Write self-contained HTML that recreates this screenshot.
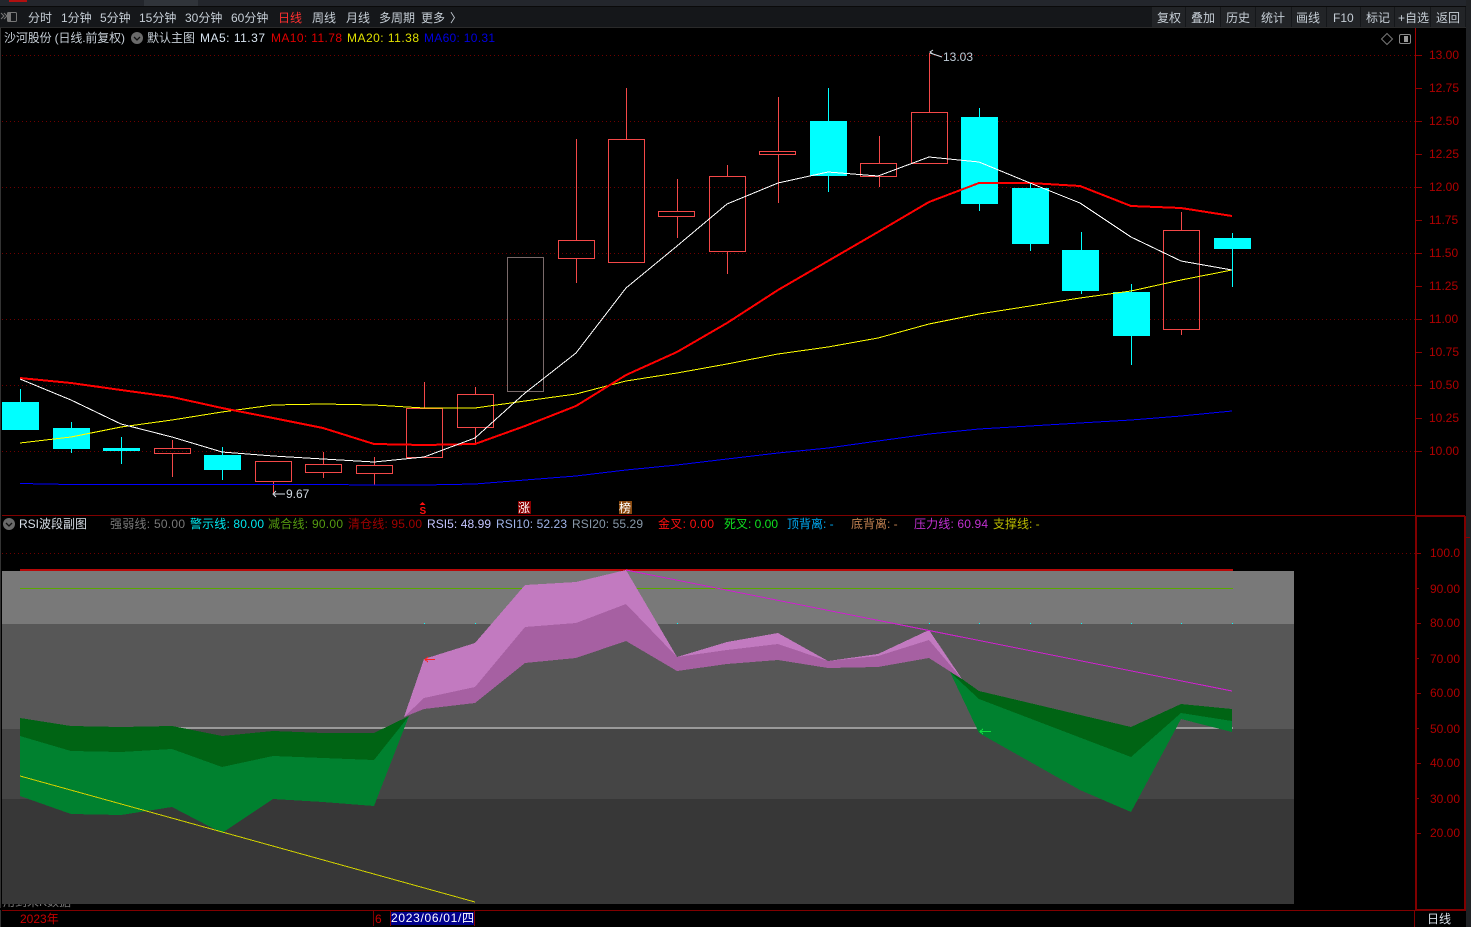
<!DOCTYPE html>
<html><head><meta charset="utf-8"><style>
html,body{margin:0;padding:0;background:#000;width:1471px;height:927px;overflow:hidden}
svg{display:block}
text{font-family:"Liberation Sans","Noto Sans CJK SC",sans-serif;font-size:12px;dominant-baseline:auto}
.t{fill:#c6ced6}
.ax{fill:#b00000}
.ce{shape-rendering:crispEdges}
</style></head><body>
<svg width="1471" height="927" viewBox="0 0 1471 927" xmlns="http://www.w3.org/2000/svg">
<rect width="1471" height="927" fill="#000"/>
<!-- top chrome -->
<g class="ce">
<rect x="0" y="0" width="1471" height="6" fill="#23262c"/>
<rect x="9" y="0" width="18" height="2" fill="#b01010"/>
<rect x="144" y="0" width="54" height="6" fill="#30343a"/>
<rect x="0" y="6" width="1471" height="1" fill="#0a0a0a"/>
<rect x="0" y="7" width="1471" height="20" fill="#15171a"/>
<rect x="0" y="27" width="1471" height="1" fill="#2a2a2a"/>
<g fill="#222427">
<rect x="1152" y="7" width="33" height="20"/><rect x="1186" y="7" width="34" height="20"/><rect x="1221" y="7" width="34" height="20"/><rect x="1256" y="7" width="35" height="20"/><rect x="1292" y="7" width="34" height="20"/><rect x="1327" y="7" width="33" height="20"/><rect x="1361" y="7" width="33" height="20"/><rect x="1395" y="7" width="35" height="20"/><rect x="1431" y="7" width="34" height="20"/>
</g>
<rect x="1466" y="0" width="5" height="927" fill="#202225"/>
<rect x="0" y="28" width="1" height="899" fill="#333"/>
</g>
<g fill="none" stroke="#777">
<path d="M1 13l3 3-3 3M4 13l3 3-3 3" stroke-width="1"/>
<rect x="7.500" y="12.500" width="9" height="9" rx="1"/>
<rect x="8" y="13" width="3" height="8" fill="#777" stroke="none"/>
</g>
<g class="t">
<text x="28" y="22">分时</text><text x="61" y="22">1分钟</text><text x="100" y="22">5分钟</text><text x="139" y="22">15分钟</text><text x="185" y="22">30分钟</text><text x="231" y="22">60分钟</text>
<text x="278" y="22" style="fill:#ff3030">日线</text><text x="312" y="22">周线</text><text x="346" y="22">月线</text><text x="379" y="22">多周期</text><text x="421" y="22">更多</text><text x="450" y="22">〉</text>
<text x="1157" y="22">复权</text><text x="1191" y="22">叠加</text><text x="1226" y="22">历史</text><text x="1261" y="22">统计</text><text x="1296" y="22">画线</text><text x="1333" y="22">F10</text><text x="1366" y="22">标记</text><text x="1398" y="22">+自选</text><text x="1436" y="22">返回</text>
</g>
<!-- info row -->
<text x="4" y="42" class="t" textLength="121">沙河股份 (日线.前复权)</text>
<circle cx="137" cy="38" r="6" fill="#6a6a6a"/><path d="M134 37l3 3 3-3" stroke="#111" stroke-width="1.3" fill="none"/>
<text x="147" y="42" class="t">默认主图</text>
<text x="200" y="42" fill="#d8e4f0" textLength="65">MA5: 11.37</text>
<text x="271" y="42" fill="#e00000" textLength="71">MA10: 11.78</text>
<text x="347" y="42" fill="#e0e000" textLength="72">MA20: 11.38</text>
<text x="424" y="42" fill="#0000e0" textLength="71">MA60: 10.31</text>
<path d="M1387 33.500l5.500 5.500-5.500 5.500-5.500-5.500z" fill="none" stroke="#777"/>
<rect x="1399.500" y="34.500" width="11" height="9" rx="1.500" fill="none" stroke="#888"/><rect x="1404" y="36" width="4" height="6" fill="#999"/>
<!-- grid -->
<g stroke="#6e0000" stroke-dasharray="1 3" class="ce">
<path d="M2 55.500H1415M2 121.500H1415M2 187.500H1415M2 253.500H1415M2 319.500H1415M2 385.500H1415M2 451.500H1415M2 553.500H1415"/>
</g>
<!-- frames -->
<g class="ce" fill="#800000">
<rect x="1415" y="28" width="1" height="488" fill="#a00000"/>
<rect x="2" y="515" width="1413" height="1"/>
<rect x="1415" y="515" width="50" height="2"/>
<rect x="1415" y="516" width="2" height="395"/>
<rect x="1464" y="516" width="2" height="395"/>
<rect x="2" y="910" width="1464" height="1"/>
<rect x="1415" y="909" width="50" height="2"/>
<rect x="1414" y="911" width="1" height="16"/>
<rect x="373" y="911" width="1" height="15"/>
<rect x="390" y="911" width="1" height="15"/>
<rect x="474" y="911" width="1" height="15"/>
</g>
<g stroke="#8a0000" class="ce">
<path d="M1416 55.500h6M1416 88.500h6M1416 121.500h6M1416 154.500h6M1416 187.500h6M1416 220.500h6M1416 253.500h6M1416 286.500h6M1416 319.500h6M1416 352.500h6M1416 385.500h6M1416 418.500h6M1416 451.500h6M1417 553.500h4M1417 588.500h2M1417 623.500h4M1417 658.500h2M1417 693.500h4M1417 728.500h2M1417 763.500h4M1417 798.500h2M1417 833.500h4M1466 537.500h4"/>
</g>
<g class="ax">
<text x="1429" y="59">13.00</text><text x="1429" y="92">12.75</text><text x="1429" y="125">12.50</text><text x="1429" y="158">12.25</text><text x="1429" y="191">12.00</text><text x="1429" y="224">11.75</text><text x="1429" y="257">11.50</text><text x="1429" y="290">11.25</text><text x="1429" y="323">11.00</text><text x="1429" y="356">10.75</text><text x="1429" y="389">10.50</text><text x="1429" y="422">10.25</text><text x="1429" y="455">10.00</text>
<text x="1430" y="557">100.0</text><text x="1430" y="593">90.00</text><text x="1430" y="627">80.00</text><text x="1430" y="663">70.00</text><text x="1430" y="697">60.00</text><text x="1430" y="733">50.00</text><text x="1430" y="767">40.00</text><text x="1430" y="803">30.00</text><text x="1430" y="837">20.00</text>
</g>
<!-- candles: cyan -->
<g class="ce" stroke="#00ffff" fill="none">
<path d="M20.500 389V402M71.500 422V428M71.500 449V453M121.500 437V464M222.500 447V455M222.500 470V480M828.500 88V121M828.500 175V192M979.500 108V117M979.500 204V211M1030.500 183V188M1030.500 244V251M1081.500 232V250M1081.500 291V294M1131.500 284V292M1131.500 336V365M1232.500 233V238M1232.500 249V287"/>
</g>
<g class="ce" fill="#00ffff">
<rect x="2" y="402" width="37" height="28"/><rect x="53" y="428" width="37" height="21"/><rect x="103" y="448" width="37" height="3"/><rect x="204" y="455" width="37" height="15"/><rect x="810" y="121" width="37" height="55"/><rect x="961" y="117" width="37" height="87"/><rect x="1012" y="188" width="37" height="56"/><rect x="1062" y="250" width="37" height="41"/><rect x="1113" y="292" width="37" height="44"/><rect x="1214" y="238" width="37" height="11"/>
</g>
<!-- candles: red -->
<g class="ce" stroke="#f44848" fill="none">
<path d="M172.500 440V448M172.500 453V477M273.500 482V493M323.500 452V464M323.500 472V478M374.500 457V466M374.500 473V485M424.500 382V408M475.500 387V394M475.500 427V443M576.500 139V240M576.500 258V283M626.500 88V139M677.500 179V211M677.500 216V238M727.500 165V176M727.500 251V274M778.500 97V151M778.500 154V203M879.500 136V163M879.500 177V187M929.500 53V112M1181.500 212V230M1181.500 329V335"/>
<rect x="154.500" y="448.500" width="36" height="5"/>
<rect x="255.500" y="461.500" width="36" height="20"/>
<rect x="305.500" y="464.500" width="36" height="8"/>
<rect x="356.500" y="465.500" width="36" height="8"/>
<rect x="406.500" y="408.500" width="36" height="49"/>
<rect x="457.500" y="394.500" width="36" height="33"/>
<rect x="558.500" y="240.500" width="36" height="18"/>
<rect x="608.500" y="139.500" width="36" height="123"/>
<rect x="658.500" y="211.500" width="36" height="5"/>
<rect x="709.500" y="176.500" width="36" height="75"/>
<rect x="759.500" y="151.500" width="36" height="3"/>
<rect x="860.500" y="163.500" width="36" height="13"/>
<rect x="911.500" y="112.500" width="36" height="51"/>
<rect x="1163.500" y="230.500" width="36" height="99"/>
</g>
<path class="ce" d="M507.500 257.500h36v134h-36z" fill="none" stroke="#7a6a6a"/>
<path class="ce" d="M525.500 391V392" stroke="#7a6a6a"/>
<!-- MA lines -->
<g fill="none" class="ce">
<polyline stroke="#0000ff" stroke-width="1" points="20,483.500 71,484.500 121,484.500 172,484.500 222,484.500 273,484.500 323,484.500 374,485 424,485 475,484 525,480 576,476 626,470 677,465 727,459 778,453 828,448 878,441 929,434 979,429 1030,426 1080,423 1131,420 1181,416 1232,411"/>
<polyline stroke="#ffff00" stroke-width="1" points="20,443 71,437 121,427 172,420 222,412 273,405 323,404 374,405 424,408 475,408 525,401 576,394 626,381 677,373 727,364 778,354 828,347 878,338 929,324 979,314 1030,306 1080,298 1131,291 1181,280 1232,270"/>
<polyline stroke="#ff0000" stroke-width="2" points="20,378 71,383 121,390 172,397 222,408 273,418 323,428 374,444 424,445 475,444 525,426 576,406 626,375 677,352 727,323 778,290 828,261 878,232 929,202 979,183 1030,183 1080,186 1131,206 1181,208 1232,216"/>
<polyline stroke="#ffffff" stroke-width="1" points="20,379 71,400 121,424 172,437 222,452 273,456 323,459 374,462 424,457 475,438 525,393 576,353 626,288 677,246 727,204 778,183 828,172 878,176 929,157 979,162 1030,183 1080,203 1131,237 1181,261 1232,270"/>
</g>
<!-- markers -->
<g fill="none" stroke="#d8e0e8">
<path d="M274 494H285M276 491l-3 3 3 3"/>
<path d="M942 57L930 53M933 50l-3 2 3 2"/>
</g>
<text x="286" y="498" fill="#d0d8e0">9.67</text>
<text x="943" y="61" fill="#c0ccd8">13.03</text>
<!-- signals -->
<path d="M422.500 502l3 3h-6z" fill="#ff1010"/>
<text x="419.500" y="514" fill="#ff1010" style="font-size:10px;font-weight:bold">S</text>
<rect x="518" y="501" width="13" height="13" fill="#8a0000" class="ce"/><text x="518" y="512" fill="#fff">涨</text>
<rect x="619" y="501" width="13" height="13" fill="#8a4a10" class="ce"/><text x="619" y="512" fill="#fff">榜</text>
<!-- lower info -->
<circle cx="9" cy="524" r="6" fill="#6a6a6a"/><path d="M6 523l3 3 3-3" stroke="#111" stroke-width="1.300" fill="none"/>
<text x="19" y="528" fill="#d8dfe8">RSI波段副图</text>
<text x="110" y="528" fill="#787878" textLength="75">强弱线: 50.00</text>
<text x="190" y="528" fill="#00e8f0" textLength="74">警示线: 80.00</text>
<text x="268" y="528" fill="#559a10" textLength="75">减合线: 90.00</text>
<text x="348" y="528" fill="#a00000" textLength="74">清仓线: 95.00</text>
<text x="427" y="528" fill="#c4c4ff" textLength="64">RSI5: 48.99</text>
<text x="496" y="528" fill="#a0b4e8" textLength="71">RSI10: 52.23</text>
<text x="572" y="528" fill="#8898a8" textLength="71">RSI20: 55.29</text>
<text x="658" y="528" fill="#ff1010" textLength="56">金叉: 0.00</text>
<text x="724" y="528" fill="#10e020" textLength="54">死叉: 0.00</text>
<text x="787" y="528" fill="#00a8f0">顶背离: -</text>
<text x="851" y="528" fill="#c08050">底背离: -</text>
<text x="914" y="528" fill="#c030d0" textLength="74">压力线: 60.94</text>
<text x="993" y="528" fill="#b8b800">支撑线: -</text>
<!-- clipped text under bands -->
<text x="3" y="906" fill="#777" style="font-size:12px">用到未K数据</text>
<rect x="0" y="908" width="300" height="2" fill="#000" class="ce"/>
<!-- bands -->
<g class="ce">
<rect x="2" y="571" width="1292" height="53" fill="#797979"/>
<rect x="2" y="624" width="1292" height="105" fill="#575757"/>
<rect x="2" y="729" width="1292" height="70" fill="#454545"/>
<rect x="2" y="799" width="1292" height="105" fill="#373737"/>
<rect x="20" y="569" width="1213" height="2" fill="#b80808"/>
<rect x="20" y="588" width="1213" height="1" fill="#5aa800"/>
<rect x="20" y="727" width="1213" height="2" fill="#9a9a9a"/>
</g>
<g fill="#00ffff" class="ce"><rect x="424" y="623" width="1" height="1"/><rect x="475" y="623" width="1" height="1"/><rect x="677" y="623" width="1" height="1"/><rect x="929" y="623" width="1" height="1"/><rect x="979" y="623" width="1" height="1"/><rect x="1030" y="623" width="1" height="1"/><rect x="1081" y="623" width="1" height="1"/><rect x="1131" y="623" width="1" height="1"/><rect x="1181" y="623" width="1" height="1"/><rect x="1232" y="623" width="1" height="1"/></g>
<!-- areas -->
<g class="ce">
<polygon fill="#c27ac0" points="404,717 424,659 475,643 525,585 576,582 626,570 677,657 727,642 778,633 828,661 878,654 929,630 962,679 929,640 878,656 828,661 778,644 727,650 677,657 626,604 576,623 525,627 475,687 424,698"/>
<polygon fill="#a660a2" points="404,717 424,698 475,687 525,627 576,623 626,604 677,657 727,650 778,644 828,661 878,656 929,640 962,679 929,658 878,667 828,668 778,660 727,664 677,671 626,641 576,658 525,663 475,703 424,709"/>
<polygon fill="#00812f" points="20,736 71,751 121,752 172,749 222,767 273,756 323,758 374,760 409,716 374,806 323,802 273,799 222,833 172,807 121,815 71,814 20,796"/>
<polygon fill="#006414" points="20,718 71,726 121,727 172,726 222,736 273,731 323,733 374,733 409,716 374,760 323,758 273,756 222,767 172,749 121,752 71,751 20,736"/>
<polygon fill="#00812f" points="950,672 979,699 1131,757 1181,713 1232,721 1232,732 1181,719 1131,812 1080,790 979,733"/>
<polygon fill="#006414" points="950,672 962,679 979,691 1131,727 1181,704 1232,709 1232,721 1181,713 1131,757 979,699"/>
</g>
<g fill="none" class="ce">
<path d="M626 570L1232 691" stroke="#d020d0"/>
<path d="M20 776L475 902" stroke="#d0d000"/>
<path d="M425 659.500H435M428 657l-3 2.500 3 2.500" stroke="#ff2020"/>
<path d="M980 731.500H991M983 729l-3 2.500 3 2.500" stroke="#10e040"/>
</g>
<!-- bottom -->
<text x="20" y="923" fill="#c80000">2023年</text>
<text x="375" y="923" fill="#c80000">6</text>
<rect x="391" y="912" width="83" height="13" fill="#00008c" class="ce"/>
<text x="391" y="922" fill="#fff" textLength="83">2023/06/01/四</text>
<text x="1427" y="923" fill="#d8e0e8">日线</text>
</svg>
</body></html>
